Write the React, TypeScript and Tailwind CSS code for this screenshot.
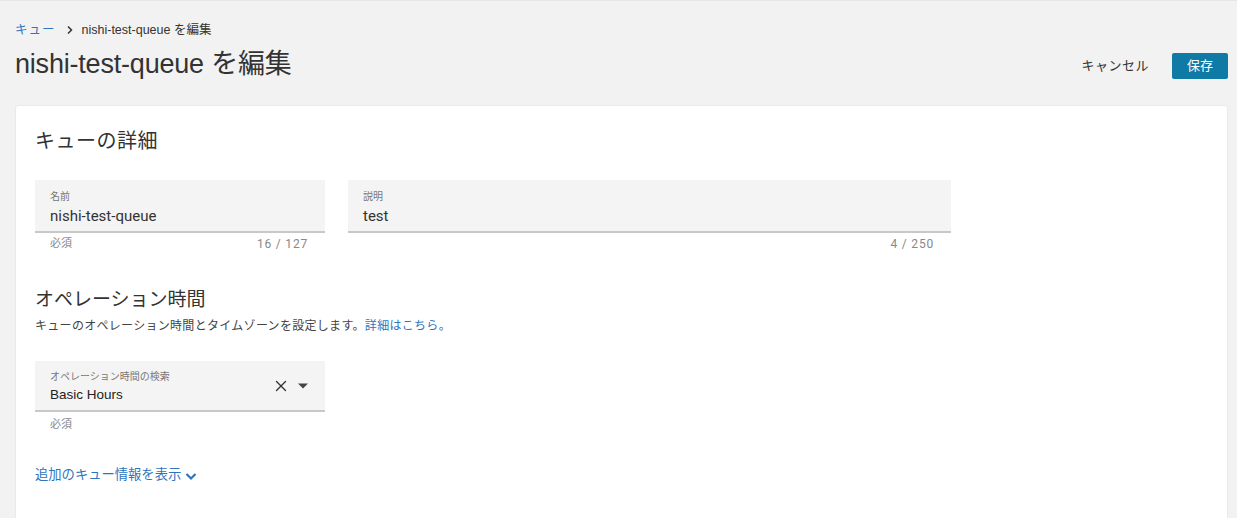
import { X } from 'lucide-react'

const jp = 'font-["Liberation_Sans","Noto_Sans_CJK_JP",sans-serif]'
const rb = 'font-["Roboto","Noto_Sans_CJK_JP",sans-serif]'

function TextField({
  label,
  value,
  helper,
  count,
  width,
}: {
  label: string
  value: string
  helper?: string
  count: string
  width: string
}) {
  return (
    <div className={width}>
      <div className="h-[53px] bg-[#f4f4f4] border-b-2 border-[#c8c8c8] px-[15px] pt-[10px]">
        <div className={`${rb} text-[10px] leading-[14px] text-[#777]`}>{label}</div>
        <div className={`${rb} text-[15px] leading-[22px] text-[#333] mt-[1px]`}>{value}</div>
      </div>
      <div className={`${rb} flex justify-between px-[15px] pt-[3px] text-[11px] leading-[16px] text-[#888]`}>
        <span>{helper}</span>
        <span className="pr-[2px] text-[12px] tracking-[0.8px]">{count}</span>
      </div>
    </div>
  )
}

export default function App() {
  return (
    <div className={`${jp} w-[1237px] h-[518px] overflow-hidden bg-[#f2f2f2] border-t border-[#e6e6e6]`}>
      <div className="px-[15px] pt-[20px]">
        <div className="flex items-center text-[12.5px] leading-[18px] text-[#333]">
          <span className="text-[#2f74c0] tracking-[1px]">キュー</span>
          <svg className="ml-[10px] mr-[8px]" width="8" height="10" viewBox="0 0 8 10">
            <path d="M2 1.5 L5.5 5 L2 8.5" fill="none" stroke="#333" strokeWidth="1.5" />
          </svg>
          <span>nishi-test-queue を編集</span>
        </div>
        <div className="flex items-center justify-between mt-[5px]">
          <h1 className="text-[27px] leading-[40px] text-[#333] tracking-[-0.2px]">nishi-test-queue を編集</h1>
          <div className="flex items-center mr-[-6px] mt-[3px]">
            <span className="text-[13px] text-[#333] tracking-[0.5px] mr-[23px]">キャンセル</span>
            <button className="h-[26px] w-[56px] rounded-[2px] bg-[#0f7aa5] text-white text-[13px]">保存</button>
          </div>
        </div>
      </div>

      <div className="ml-[16px] w-[1211px] mt-[22px] h-[420px] bg-white rounded-t-[2px] shadow-[0_0_2px_rgba(0,0,0,0.12)] px-[19px] pt-[21px]">
        <h2 className="text-[20px] leading-[28px] text-[#333] tracking-[0.5px]">キューの詳細</h2>

        <div className="flex gap-[23px] mt-[25px]">
          <TextField label="名前" value="nishi-test-queue" helper="必須" count="16 / 127" width="w-[290px]" />
          <TextField label="説明" value="test" count="4 / 250" width="w-[603px]" />
        </div>

        <h2 className="mt-[35px] text-[19px] leading-[26px] text-[#333]">オペレーション時間</h2>
        <p className="mt-[4px] text-[12px] leading-[18px] text-[#444] tracking-[0.3px]">
          キューのオペレーション時間とタイムゾーンを設定します。
          <span className="text-[#2f74c0]">詳細はこちら。</span>
        </p>

        <div className="w-[290px] mt-[26px]">
          <div className="h-[51px] bg-[#f4f4f4] border-b-2 border-[#c8c8c8] pl-[15px] pr-[16px] flex items-center">
            <div className="flex-1 pt-[4px]">
              <div className="text-[10px] leading-[14px] text-[#777]">オペレーション時間の検索</div>
              <div className="text-[13.5px] leading-[20px] text-[#222] mt-[1px]">Basic Hours</div>
            </div>
            <X className="w-[18px] h-[18px] text-[#333] mr-[7px]" strokeWidth={1.8} />
            <svg width="12" height="8" viewBox="0 0 12 8">
              <path d="M1 1.5 H11 L6 6.5 Z" fill="#444" />
            </svg>
          </div>
          <div className={`${rb} px-[15px] pt-[5px] text-[11px] leading-[16px] text-[#888]`}>必須</div>
        </div>

        <div className="mt-[32px] flex items-center text-[13.3px] leading-[20px] text-[#2f74c0]">
          <span>追加のキュー情報を表示</span>
          <svg className="ml-[4px] mt-[3px]" width="12" height="9" viewBox="0 0 12 9">
            <path d="M1.5 2 L6 6.5 L10.5 2" fill="none" stroke="#2f74c0" strokeWidth="2.2" />
          </svg>
        </div>
      </div>
    </div>
  )
}
